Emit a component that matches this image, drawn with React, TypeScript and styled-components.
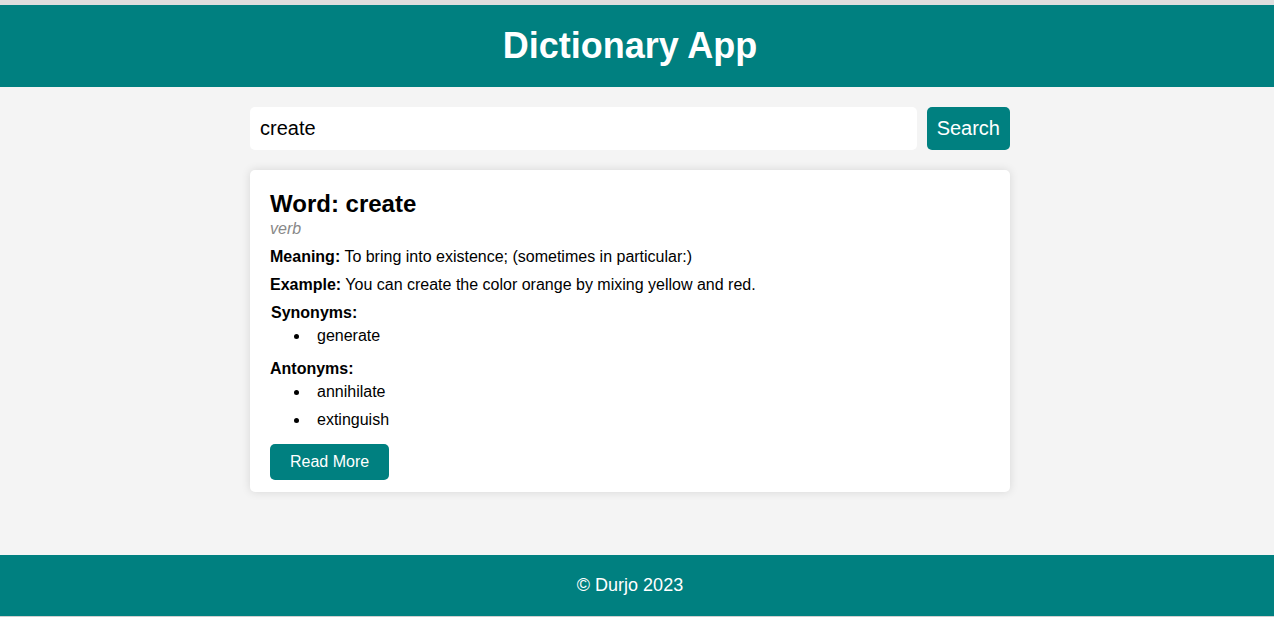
import React from "react";
import styled, { createGlobalStyle } from "styled-components";

const GlobalStyle = createGlobalStyle`
  html, body {
    margin: 0;
    padding: 0;
    height: 100%;
  }
  body {
    font-family: "Liberation Sans", Arial, sans-serif;
    background: #f4f4f4;
    color: #000;
  }
  * { box-sizing: border-box; }
`;

const Page = styled.div`
  min-height: 100vh;
  display: flex;
  flex-direction: column;
  border-top: 5px solid #dedede;
  border-bottom: 1px solid #cfcfcf;
`;

const Header = styled.header`
  background: #008080;
  color: #fff;
  padding: 20px 14px 20px 0;
  text-align: center;
`;

const Title = styled.h1`
  margin: 0;
  font-size: 36px;
  font-weight: bold;
  line-height: 42px;
`;

const Main = styled.main`
  flex: 1;
  padding: 20px 14px 20px 0;
`;

const Container = styled.div`
  width: 760px;
  margin: 0 auto;
  display: flex;
  flex-direction: column;
  gap: 20px;
`;

const SearchRow = styled.form`
  display: flex;
  gap: 10px;
`;

const SearchInput = styled.input`
  flex: 1;
  height: 43px;
  padding: 10px;
  border: none;
  border-radius: 5px;
  background: #fff;
  font-family: inherit;
  font-size: 20px;
  color: #000;
  outline: none;
`;

const TealButton = styled.button<{ $size?: "lg" | "md" }>`
  background: #008080;
  color: #fff;
  border: none;
  border-radius: 5px;
  font-family: inherit;
  cursor: pointer;
  font-size: ${(p) => (p.$size === "lg" ? "20px" : "16px")};
  line-height: ${(p) => (p.$size === "lg" ? "23px" : "18px")};
  padding: ${(p) => (p.$size === "lg" ? "10px" : "9px 20px")};
`;

const Card = styled.section`
  background: #fff;
  border-radius: 5px;
  box-shadow: 0 0 10px rgba(0, 0, 0, 0.12);
  padding: 20px 20px 12px;
  display: flex;
  flex-direction: column;
  align-items: flex-start;
`;

const WordTitle = styled.h2`
  margin: 0;
  font-size: 24px;
  line-height: 28px;
  font-weight: bold;
`;

const PartOfSpeech = styled.p`
  margin: 2px 0 0;
  font-size: 16px;
  line-height: 18px;
  font-style: italic;
  color: #888;
`;

const Line = styled.p`
  margin: 10px 0 0;
  font-size: 16px;
  line-height: 18px;
`;

const Label = styled.strong`
  font-weight: bold;
`;

const Section = styled.div`
  margin-top: 10px;
  font-size: 16px;
  line-height: 18px;
`;

const SectionLabel = styled.div<{ $shift?: boolean }>`
  font-weight: bold;
  padding-left: ${(p) => (p.$shift ? "1px" : "0")};
`;

const List = styled.ul`
  margin: 0;
  padding-left: 40px;
`;

const Item = styled.li`
  padding: 5px 0 5px 7px;
`;

const ReadMoreRow = styled.div`
  margin-top: 10px;
`;

const Footer = styled.footer`
  background: #008080;
  color: #fff;
  padding: 20px 14px 20px 0;
  text-align: center;
  font-size: 18px;
  line-height: 21px;
`;

export default function App() {
  return (
    <>
      <GlobalStyle />
      <Page>
        <Header>
          <Title>Dictionary App</Title>
        </Header>
        <Main>
          <Container>
            <SearchRow onSubmit={(e) => e.preventDefault()}>
              <SearchInput type="text" defaultValue="create" />
              <TealButton $size="lg" type="submit">
                Search
              </TealButton>
            </SearchRow>
            <Card>
              <WordTitle>Word: create</WordTitle>
              <PartOfSpeech>verb</PartOfSpeech>
              <Line>
                <Label>Meaning:</Label> To bring into existence; (sometimes in particular:)
              </Line>
              <Line>
                <Label>Example:</Label> You can create the color orange by mixing yellow and red.
              </Line>
              <Section>
                <SectionLabel $shift>Synonyms:</SectionLabel>
                <List>
                  <Item>generate</Item>
                </List>
              </Section>
              <Section>
                <SectionLabel>Antonyms:</SectionLabel>
                <List>
                  <Item>annihilate</Item>
                  <Item>extinguish</Item>
                </List>
              </Section>
              <ReadMoreRow>
                <TealButton $size="md" type="button">
                  Read More
                </TealButton>
              </ReadMoreRow>
            </Card>
          </Container>
        </Main>
        <Footer>© Durjo 2023</Footer>
      </Page>
    </>
  );
}
